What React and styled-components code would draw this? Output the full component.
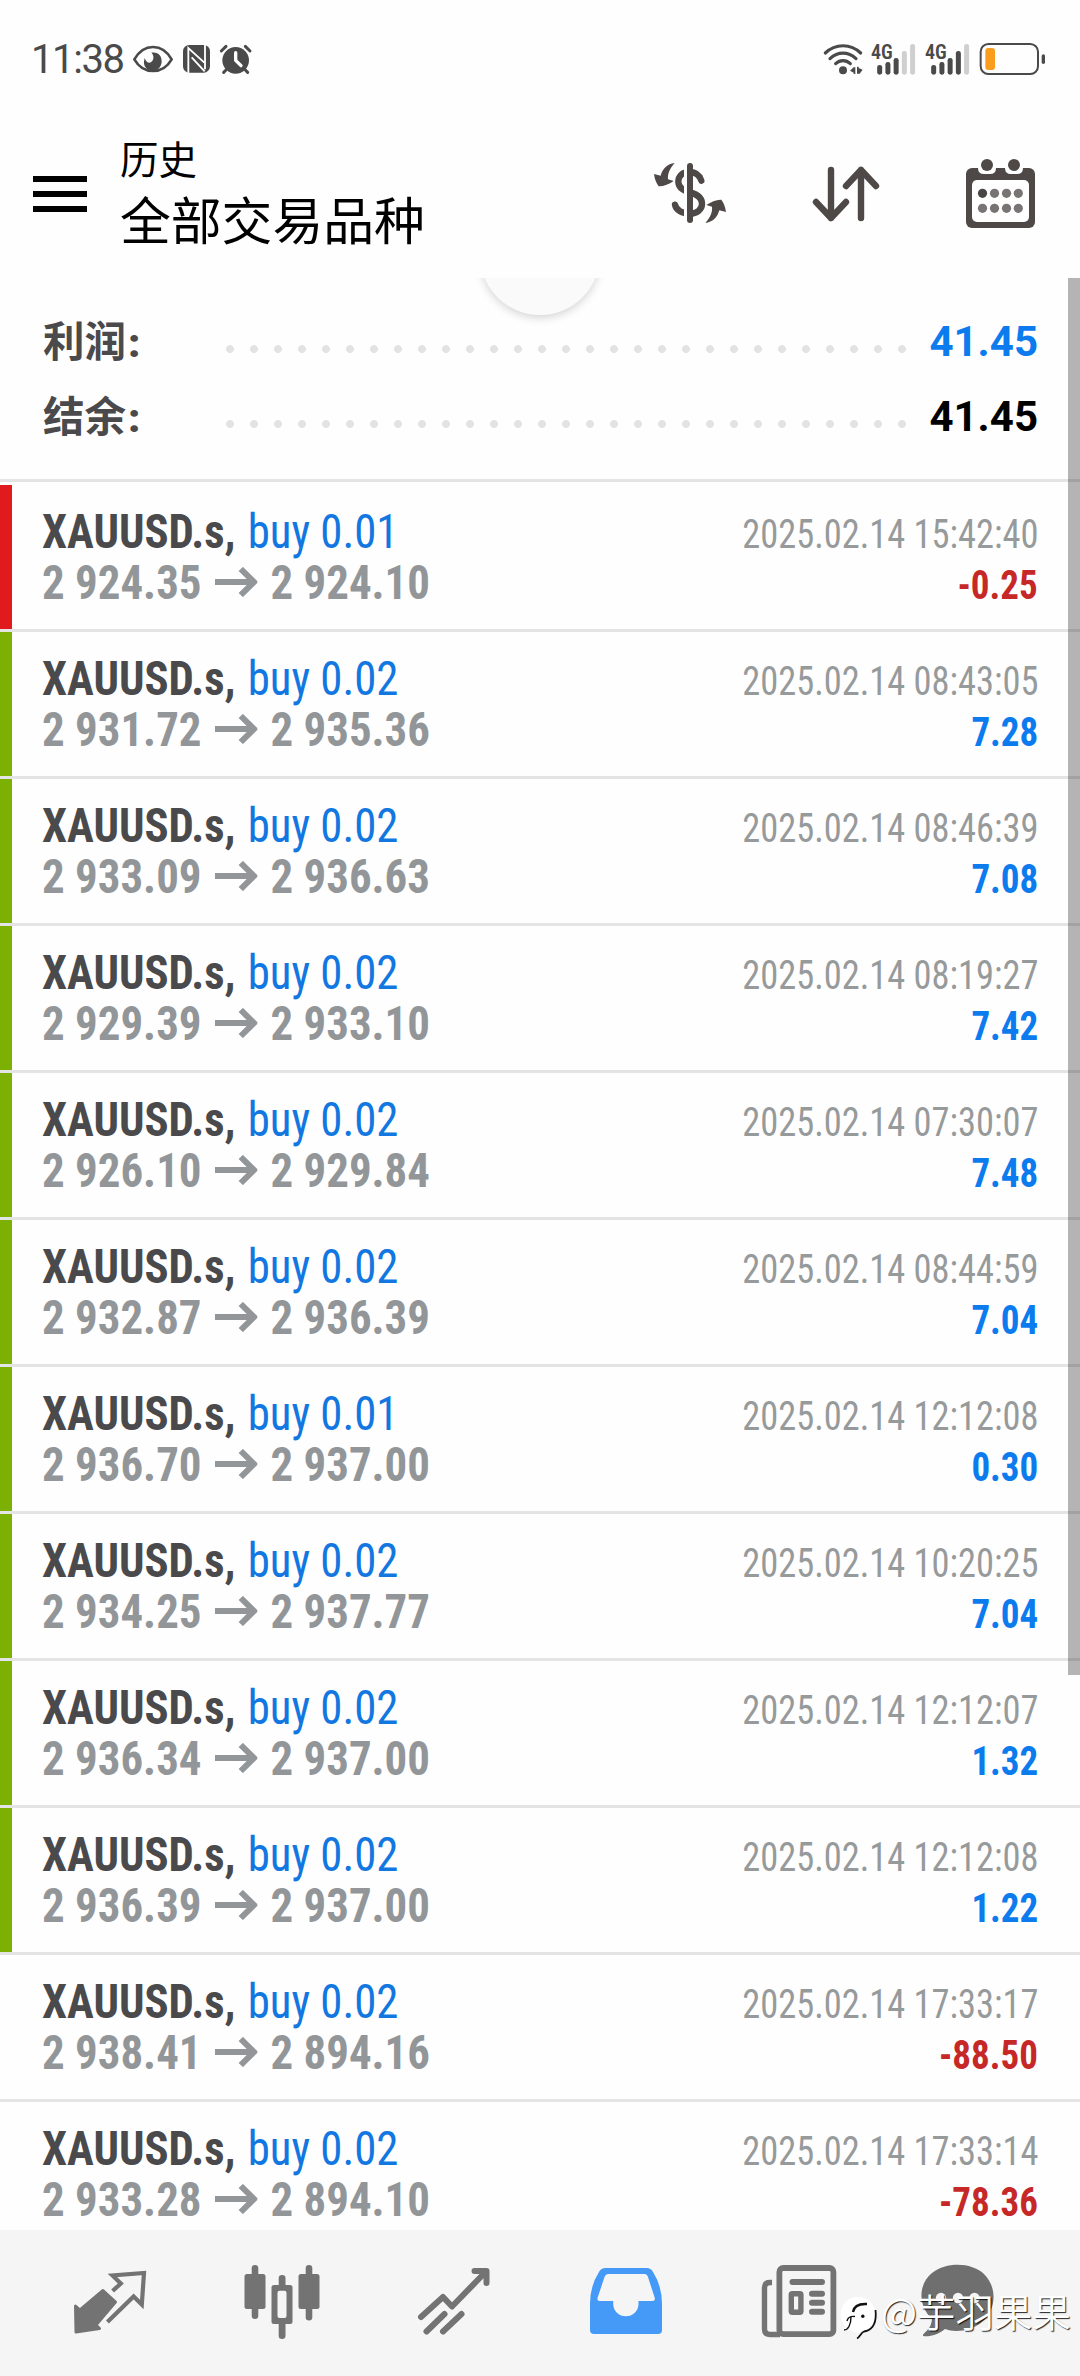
import React from 'react';
import styled, { createGlobalStyle } from 'styled-components';

const deals = [
  { volume: '0.01', open: '2 924.35', close: '2 924.10', time: '2025.02.14 15:42:40', profit: '-0.25', mark: 'sl' },
  { volume: '0.02', open: '2 931.72', close: '2 935.36', time: '2025.02.14 08:43:05', profit: '7.28', mark: 'tp' },
  { volume: '0.02', open: '2 933.09', close: '2 936.63', time: '2025.02.14 08:46:39', profit: '7.08', mark: 'tp' },
  { volume: '0.02', open: '2 929.39', close: '2 933.10', time: '2025.02.14 08:19:27', profit: '7.42', mark: 'tp' },
  { volume: '0.02', open: '2 926.10', close: '2 929.84', time: '2025.02.14 07:30:07', profit: '7.48', mark: 'tp' },
  { volume: '0.02', open: '2 932.87', close: '2 936.39', time: '2025.02.14 08:44:59', profit: '7.04', mark: 'tp' },
  { volume: '0.01', open: '2 936.70', close: '2 937.00', time: '2025.02.14 12:12:08', profit: '0.30', mark: 'tp' },
  { volume: '0.02', open: '2 934.25', close: '2 937.77', time: '2025.02.14 10:20:25', profit: '7.04', mark: 'tp' },
  { volume: '0.02', open: '2 936.34', close: '2 937.00', time: '2025.02.14 12:12:07', profit: '1.32', mark: 'tp' },
  { volume: '0.02', open: '2 936.39', close: '2 937.00', time: '2025.02.14 12:12:08', profit: '1.22', mark: 'tp' },
  { volume: '0.02', open: '2 938.41', close: '2 894.16', time: '2025.02.14 17:33:17', profit: '-88.50' },
  { volume: '0.02', open: '2 933.28', close: '2 894.10', time: '2025.02.14 17:33:14', profit: '-78.36' },
];

const markColors = { sl: '#e11b1d', tp: '#7cb002' };

/* 상태바 아이콘 */
const EyeIcon = () => (
  <svg width="42" height="32" viewBox="36 24 126 96">
    <path d="M43 70 C58 44 78 33 99 33 S140 44 155 70 C140 96 120 105 99 105 S58 96 43 70 Z" fill="none" stroke="#4a4a4a" strokeWidth="8" strokeLinejoin="round" />
    <path d="M94 50 C114 46 126 60 125 77 C124 94 112 104 98 104 C82 104 70 92 72 76 L74 66 C78 80 90 84 96 76 C102 68 102 58 94 50 Z" fill="#4a4a4a" />
  </svg>
);

const NfcIcon = () => (
  <svg width="29" height="32" viewBox="187 24 87 96">
    <rect x="190" y="27" width="81" height="83" rx="19" fill="#4a4a4a" />
    <path d="M206 112 V36 L254 80 M216 64 L255 106 M256 100 V26" fill="none" stroke="#fff" strokeWidth="5.5" />
  </svg>
);

const AlarmIcon = () => (
  <svg width="34" height="32" viewBox="297 24 102 96">
    <circle cx="347" cy="73" r="40" fill="#4a4a4a" />
    <path d="M304 45 L318 31 M376 31 L390 45 M318 102 L311 109 M376 102 L383 109" stroke="#4a4a4a" strokeWidth="9" strokeLinecap="round" />
    <path d="M347 50 V73 L363 89" fill="none" stroke="#fff" strokeWidth="10" strokeLinecap="round" strokeLinejoin="round" />
  </svg>
);

const WifiIcon = () => (
  <svg width="42" height="34" viewBox="36 18 126 102">
    <g fill="none" stroke="#4a4a4a" strokeWidth="9.5" strokeLinecap="round">
      <path d="M46 51 C76 22 122 22 152 51" />
      <path d="M60 68 C84 46 114 46 138 68" />
      <path d="M77 83 C90 71 108 71 121 83" />
    </g>
    <circle cx="99" cy="103" r="12" fill="#4a4a4a" />
    <path d="M120 104 L131 94 H136 V114 H131 V110 Z M158 101 L149 113 H141 V92 H146 V96 Z" fill="#4a4a4a" />
  </svg>
);

const SignalIcon = ({ level }) => (
  <svg width="48" height="38" viewBox="183 6 144 114">
    <text x="186" y="68" fontFamily="Roboto Condensed" fontWeight="600" fontSize="60" fill="#4a4a4a">4G</text>
    {[87, 78, 66, 45, 24].map((top, index) => (
      <rect
        key={top}
        x={204.5 + index * 24.7}
        y={top}
        width="15"
        height={116 - top}
        rx="7"
        fill={index < level ? '#4a4a4a' : '#cfcfcf'}
      />
    ))}
  </svg>
);

const BatteryIcon = () => (
  <svg width="68" height="34" viewBox="504 18 204 102">
    <rect x="512" y="24" width="172" height="90" rx="23" fill="none" stroke="#4a4a4a" strokeWidth="6" />
    <rect x="526" y="36" width="29" height="66" rx="9" fill="#fa9d1c" />
    <rect x="695" y="55" width="10" height="29" rx="5" fill="#4a4a4a" />
  </svg>
);

/* 헤더 아이콘 */
const CurrencyIcon = () => (
  <svg width="100" height="90" viewBox="0 0 300 270">
    <defs>
      <clipPath id="dollar-gap">
        <path d="M0 0 H132 V270 H0 Z M142 0 H300 V270 H142 Z" />
      </clipPath>
    </defs>
    <g fill="#4e4847">
      <path d="M104 42 C82 45 68 58 62 80 L42 75 C44 92 50 104 56 112 C70 113 86 106 101 96 L84 91 C82 74 90 58 104 42 Z" />
      <path d="M196 222 C218 219 232 206 238 184 L258 189 C256 172 250 160 244 152 C230 151 214 158 199 168 L216 173 C218 190 210 206 196 222 Z" />
      <rect x="141" y="42" width="18" height="180" rx="9" />
    </g>
    <path
      d="M184 95 C178 76 165 69 148 69 C127 69 115 82 115 98 C115 116 128 124 150 130 C172 136 186 146 186 164 C186 182 170 194 150 194 C127 194 108 184 105 167"
      fill="none"
      stroke="#4e4847"
      strokeWidth="19"
      strokeLinecap="round"
      clipPath="url(#dollar-gap)"
    />
  </svg>
);

const SortIcon = () => (
  <svg width="70" height="60" viewBox="811 164 70 60" fill="none" stroke="#4e4847" strokeWidth="6.4" strokeLinecap="round" strokeLinejoin="round">
    <path d="M831 170 V218 M816 202 L831 218 L846 202" />
    <path d="M861 218 V170 M846 186 L861 170 L876 186" />
  </svg>
);

const CalendarIcon = () => (
  <svg width="70" height="72" viewBox="966 157 70 72">
    <rect x="966" y="167" width="69" height="60" rx="6" fill="#4e4847" />
    <rect x="972" y="179" width="57" height="42" rx="5" fill="#fff" />
    {[987, 1014].map((x) => (
      <g key={x}>
        <path d={`M${x - 9} 160 V167 Q${x - 9} 173 ${x - 3} 173 H${x + 3} Q${x + 9} 173 ${x + 9} 167 V160 Z`} fill="#fff" />
        <circle cx={x} cy="164" r="6" fill="#4e4847" />
      </g>
    ))}
    {[192.3, 207.3].map((y) =>
      [982.5, 994.5, 1006.5, 1018.3].map((x) => (
        <circle key={`${x}-${y}`} cx={x} cy={y} r="4.6" fill={x === 982.5 && y === 192.3 ? '#4a4545' : '#777473'} />
      ))
    )}
  </svg>
);

/* 하단 메뉴 아이콘 */
const QuotesIcon = () => (
  <svg width="80" height="80" viewBox="70 2262 80 80">
    <path d="M75.5 2306 L80 2310 L103 2290.5 L115.5 2302 L96 2325 L99.5 2328.5 L76 2332 Z" fill="#737373" stroke="#737373" strokeWidth="3" strokeLinejoin="round" />
    <path d="M112.6 2291 L120.8 2283.5 L112.5 2275.5 L144 2273 L141.8 2304.5 L133.6 2296.5 L107.4 2322" fill="none" stroke="#737373" strokeWidth="4.2" />
  </svg>
);

const ChartIcon = () => (
  <svg width="80" height="80" viewBox="241.5 2262 80 80" fill="#737373">
    <rect x="244" y="2274" width="21" height="35" rx="2.5" />
    <rect x="251.2" y="2265" width="6.6" height="54" rx="3.3" />
    <rect x="298" y="2274" width="21" height="35" rx="2.5" />
    <rect x="305.2" y="2265" width="6.6" height="55.5" rx="3.3" />
    <rect x="278.2" y="2275" width="6.8" height="64" rx="3.3" />
    <rect x="271" y="2285" width="21" height="39" rx="2.5" />
    <rect x="277" y="2290.7" width="9" height="27.3" rx="2" fill="#f5f5f5" />
  </svg>
);

const TradeIcon = () => (
  <svg width="80" height="80" viewBox="413.5 2262 80 80" fill="none" stroke="#737373" strokeWidth="6">
    <path d="M420.5 2317 L442.5 2297 L451.5 2306.5 L485 2272" strokeLinejoin="round" strokeLinecap="round" />
    <path d="M474 2271 H486 V2283" strokeLinecap="round" strokeLinejoin="round" />
    <path d="M426 2331.5 L444 2314 M442.5 2331.5 L461 2314" strokeLinecap="round" />
  </svg>
);

const HistoryIcon = () => (
  <svg width="80" height="80" viewBox="586.5 2262 80 80">
    <path
      fillRule="evenodd"
      fill="#4599f7"
      d="M606 2268 H647 Q651.5 2268 653.5 2272 Q662.5 2286 662.5 2304 V2330 Q662.5 2334 658.5 2334 H594.5 Q590.5 2334 590.5 2330 V2304 Q590.5 2286 599.5 2272 Q601.5 2268 606 2268 Z
         M609 2274 Q606 2274 605 2277 L598 2298 Q597.5 2301 600 2301 H613.7 V2304 A12.6 12.2 0 0 0 639 2304 V2301 H653 Q656 2301 655.3 2298 L648.5 2277 Q647.5 2274 645 2274 Z"
    />
  </svg>
);

const NewsIcon = () => (
  <svg width="80" height="80" viewBox="759 2262 80 80">
    <path d="M773 2282.5 H771 Q765.5 2282.5 765.5 2288 V2329 Q765.5 2334.5 771 2334.5 H781" fill="none" stroke="#737373" strokeWidth="5.4" />
    <rect x="780.4" y="2268" width="54" height="66.2" rx="4" fill="none" stroke="#737373" strokeWidth="5.8" />
    <path d="M793.5 2282 H823 M813 2293.7 H823 M813 2302.7 H823 M813 2311.7 H823" stroke="#737373" strokeWidth="6" strokeLinecap="round" />
    <rect x="792.3" y="2293.8" width="9.6" height="18.4" rx="1" fill="none" stroke="#737373" strokeWidth="5.4" />
  </svg>
);

const MessagesIcon = () => (
  <svg width="80" height="80" viewBox="918 2262 80 80">
    <path d="M932 2319 C916 2304 920 2282 932 2273 C948 2261 972 2263 984 2274 C998 2288 996 2310 982 2322 C971 2331 955 2333 945 2329 C938 2335 929 2337 923 2336 C923 2332 931 2331 932 2319 Z" fill="#6f6f6f" />
    <circle cx="941" cy="2298" r="5.2" fill="#f5f5f5" />
    <circle cx="958" cy="2298" r="5.2" fill="#f5f5f5" />
    <circle cx="974.5" cy="2298" r="5.2" fill="#f5f5f5" />
  </svg>
);

const WatermarkLogo = () => (
  <svg width="38" height="46" viewBox="840 2295 38 46">
    <circle cx="858" cy="2314.5" r="17.5" fill="#fff" />
    <path d="M844 2329 L853 2318 L857 2334 L873 2326 Z" fill="#fff" />
    <g fill="none" stroke="#111">
      <path d="M853 2312 C854 2306 858 2303.5 867 2304" strokeWidth="2.4" />
      <path d="M847 2321 C848 2317 850 2316 855 2316.5 M851 2317 C851 2325 848 2330 844 2330" strokeWidth="1.4" />
      <path d="M875.5 2310 C877 2324 872 2330 864 2331.5 C861 2332.5 860 2337 857 2338.5" strokeWidth="1.8" />
    </g>
    <circle cx="862.8" cy="2316.3" r="1.7" fill="#111" />
  </svg>
);

const App = () => {
  return (
    <>
      <GlobalStyle />
      <Screen>
        <StatusBar>
          <StatusGroup $gap="8px">
            <Clock>11:38</Clock>
            <EyeIcon />
            <NfcIcon />
            <AlarmIcon />
          </StatusGroup>
          <StatusGroup $gap="6px">
            <WifiIcon />
            <SignalIcon level={3} />
            <SignalIcon level={4} />
            <BatteryIcon />
          </StatusGroup>
        </StatusBar>

        <Header>
          <MenuButton>
            <span />
            <span />
            <span />
          </MenuButton>
          <Titles>
            <h1>历史</h1>
            <h2>全部交易品种</h2>
          </Titles>
          <Actions>
            <CurrencyIcon />
            <SortIcon />
            <CalendarIcon />
          </Actions>
        </Header>

        <Content>
          <Refresh />
          <Summary>
            <SummaryRow>
              <SummaryLabel>利润<b>:</b></SummaryLabel>
              <Dots />
              <SummaryValue $color="#0c7bee">41.45</SummaryValue>
            </SummaryRow>
            <SummaryRow>
              <SummaryLabel>结余<b>:</b></SummaryLabel>
              <Dots />
              <SummaryValue $color="#000">41.45</SummaryValue>
            </SummaryRow>
          </Summary>
          <DealList>
            {deals.map((deal) => (
              <Deal key={deal.time + deal.open} $mark={deal.mark}>
                <DealLine>
                  <Symbol>
                    XAUUSD.s, <span>buy {deal.volume}</span>
                  </Symbol>
                  <Time>{deal.time}</Time>
                </DealLine>
                <DealLine>
                  <Prices>
                    {deal.open}
                    <svg width="45" height="30" viewBox="0 0 42 30" preserveAspectRatio="none">
                      <path d="M0 15 H39 M25.5 2 L38.5 15 L25.5 28" />
                    </svg>
                    {deal.close}
                  </Prices>
                  <Profit $loss={deal.profit.startsWith('-')}>{deal.profit}</Profit>
                </DealLine>
              </Deal>
            ))}
          </DealList>
          <ScrollThumb />
        </Content>

        <TabBar>
          <Tab><QuotesIcon /></Tab>
          <Tab><ChartIcon /></Tab>
          <Tab><TradeIcon /></Tab>
          <Tab><HistoryIcon /></Tab>
          <Tab><NewsIcon /></Tab>
          <Tab $last><MessagesIcon /></Tab>
        </TabBar>

        <Watermark>
          <WatermarkLogo />
          <span>@芋羽果果</span>
        </Watermark>
      </Screen>
    </>
  );
};

export default App;

const GlobalStyle = createGlobalStyle`
  * {
    box-sizing: border-box;
    margin: 0;
    padding: 0;
  }
  body {
    background: #fefefe;
    font-family: 'Roboto Condensed', 'Noto Sans CJK SC', sans-serif;
  }
  svg {
    display: block;
    flex: none;
  }
`;

const Screen = styled.div`
  position: relative;
  display: flex;
  flex-direction: column;
  width: 1080px;
  height: 2376px;
  overflow: hidden;
  background: #fefefe;
`;

const StatusBar = styled.div`
  display: flex;
  align-items: flex-end;
  justify-content: space-between;
  height: 76px;
  padding: 0 34px 0 32px;
`;

const StatusGroup = styled.div`
  display: flex;
  align-items: flex-end;
  gap: ${(props) => props.$gap};
`;

const Clock = styled.span`
  width: 92px;
  font: 400 40px/32px 'Roboto', sans-serif;
  letter-spacing: -1.4px;
  text-indent: -1px;
  white-space: nowrap;
  color: #4a4a4a;
`;

const Header = styled.header`
  display: flex;
  align-items: center;
  height: 202px;
  padding: 34px 44px 0 33px;
`;

const MenuButton = styled.div`
  display: flex;
  flex-direction: column;
  gap: 9px;
  width: 54px;
  margin-right: 33px;
  span {
    height: 6px;
    background: #000;
  }
`;

const Titles = styled.div`
  padding-bottom: 8px;
  font-family: 'Noto Sans CJK SC', sans-serif;
  color: #000;
  h1 {
    font-weight: 400;
    font-size: 38.5px;
    line-height: 56px;
  }
  h2 {
    font-weight: 400;
    font-size: 50.8px;
    line-height: 66px;
  }
`;

const Actions = styled.div`
  display: flex;
  align-items: center;
  margin-left: auto;
  svg:nth-child(2) {
    margin: 0 85px 0 71px;
  }
`;

const Content = styled.main`
  position: relative;
  flex: none;
  height: 1952px;
  overflow: hidden;
`;

const Refresh = styled.div`
  position: absolute;
  top: -83px;
  left: 480px;
  width: 120px;
  height: 120px;
  border-radius: 50%;
  background: #fafafa;
  box-shadow: 0 3px 8px rgba(0, 0, 0, 0.16);
`;

const Summary = styled.section`
  height: 204px;
  padding: 26px 42px 0 43px;
  border-bottom: 3px solid #e4e4e4;
  margin-bottom: 3px;
`;

const SummaryRow = styled.div`
  display: flex;
  align-items: center;
  height: 75px;
`;

const SummaryLabel = styled.span`
  width: 183px;
  font: 700 41.5px/71px 'Noto Sans CJK SC', sans-serif;
  height: 75px;
  color: #4a4a4c;
  b {
    margin-left: 2px;
    font-family: 'Roboto', sans-serif;
  }
`;

const Dots = styled.i`
  flex: none;
  width: 696px;
  height: 8px;
  margin-top: 14px;
  background: radial-gradient(circle at 4px 4px, #e3e3e3 3.6px, transparent 4.2px) 0 0 / 24px 8px;
`;

const SummaryValue = styled.span`
  margin-left: auto;
  font: 700 42px/75px 'Roboto', sans-serif;
  color: ${(props) => props.$color};
`;

const DealList = styled.ul`
  list-style: none;
`;

const Deal = styled.li`
  position: relative;
  height: 147px;
  padding: 22px 42px 0;
  border-bottom: 3px solid #e4e4e4;
  /* 손익 표시 막대 */
  &::before {
    content: '';
    position: absolute;
    top: 0;
    left: 0;
    width: 12px;
    height: 144px;
    background: ${(props) => markColors[props.$mark] || 'transparent'};
  }
`;

const DealLine = styled.div`
  display: flex;
  align-items: baseline;
  justify-content: space-between;
  height: 51px;
  line-height: 51px;
`;

const Symbol = styled.span`
  font-size: 47.5px;
  font-weight: 700;
  color: #4a4a4c;
  transform: scaleX(0.942);
  transform-origin: left;
  span {
    margin-left: 2px;
    font-weight: 400;
    color: #1277e0;
  }
`;

const Time = styled.span`
  font-size: 40px;
  color: #979a9b;
  transform: scaleX(0.91);
  transform-origin: right;
`;

const Prices = styled.span`
  font-size: 47.5px;
  font-weight: 700;
  color: #939698;
  transform: scaleX(0.945);
  transform-origin: left;
  svg {
    display: inline-block;
    margin: 0 14px;
    vertical-align: 2px;
  }
  path {
    fill: none;
    stroke: #939698;
    stroke-width: 6;
  }
`;

const Profit = styled.span`
  font-size: 40px;
  font-weight: 700;
  color: ${(props) => (props.$loss ? '#c62828' : '#0c7bee')};
  transform: scaleX(0.925);
  transform-origin: right;
`;

const ScrollThumb = styled.div`
  position: absolute;
  top: 0;
  right: 0;
  width: 12px;
  height: 1397px;
  background: rgba(0, 0, 0, 0.29);
`;

const TabBar = styled.nav`
  display: flex;
  flex: 1;
  padding: 32px 0 0 24px;
  background: #f5f5f5;
`;

const Tab = styled.div`
  display: flex;
  justify-content: center;
  width: 172px;
  margin-left: ${(props) => (props.$last ? '-12px' : '0')};
`;

const Watermark = styled.div`
  position: absolute;
  left: 840px;
  top: 2295px;
  display: flex;
  align-items: flex-start;
  span {
    margin: -8px 0 0 3px;
    font: 350 38.5px/46px 'Noto Sans CJK SC', sans-serif;
    color: #fff;
    text-shadow: 1px 1px 1px rgba(0, 0, 0, 0.85);
  }
`;
